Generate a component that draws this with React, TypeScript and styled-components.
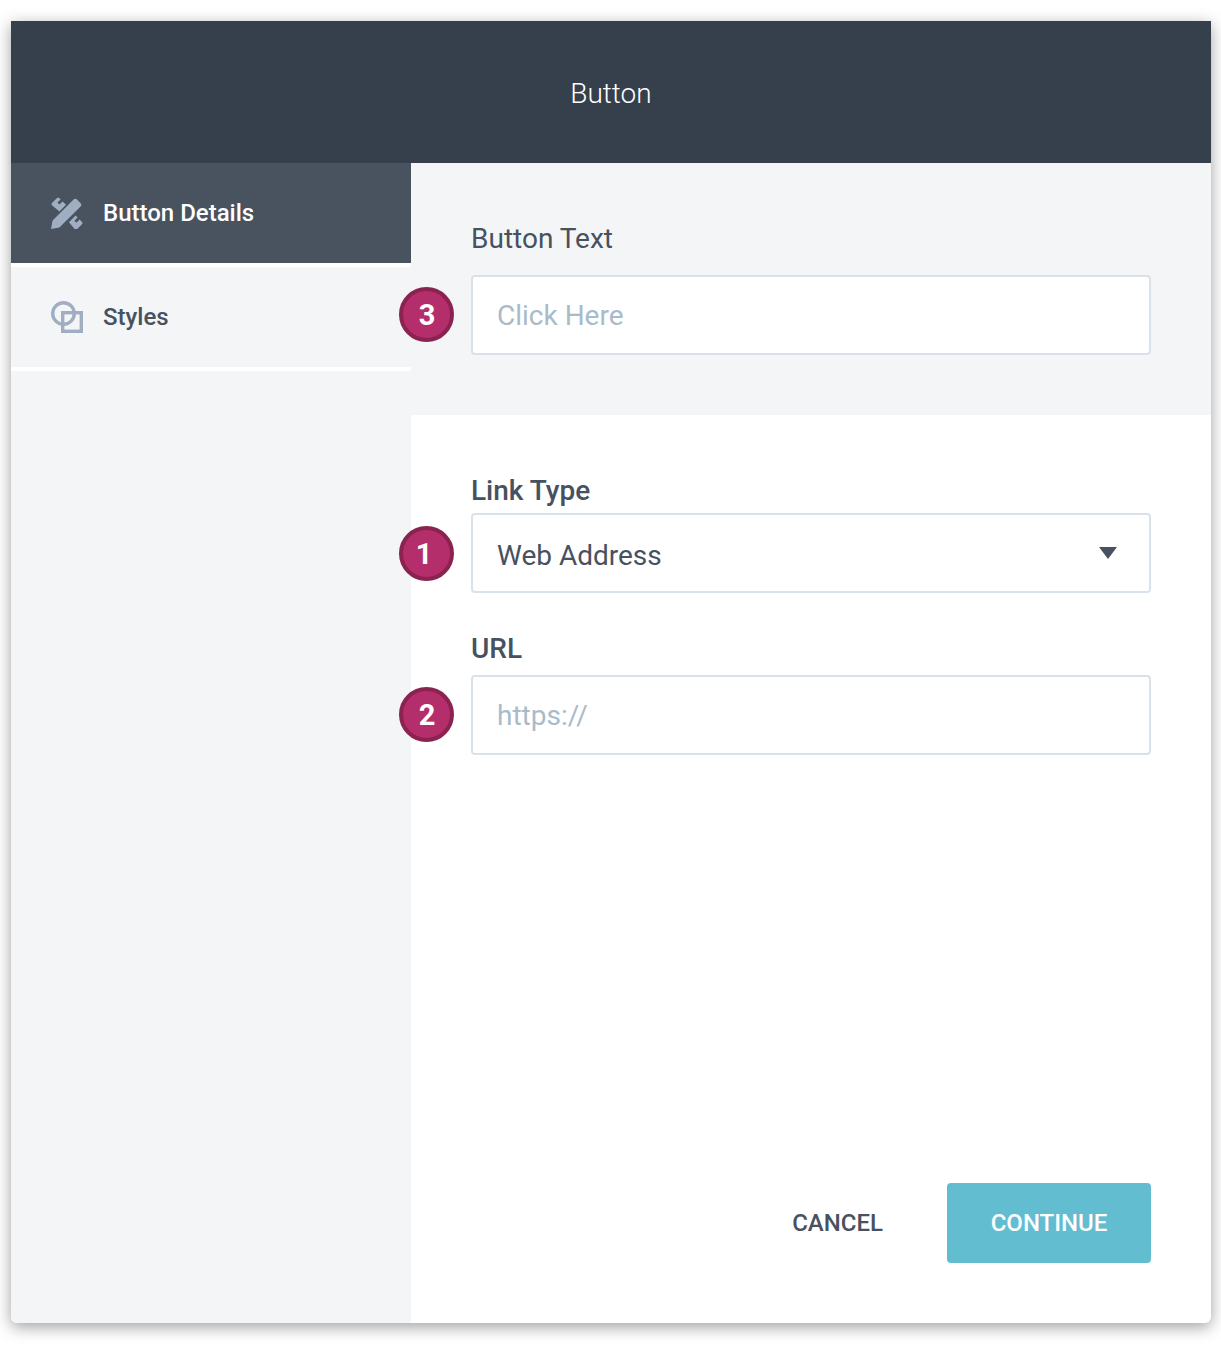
import React from "react";
import styled, { createGlobalStyle } from "styled-components";

const Global = createGlobalStyle`
  html, body { margin: 0; padding: 0; background: #fff; }
  body { font-family: Roboto, "Liberation Sans", sans-serif; -webkit-font-smoothing: antialiased; }
  * { box-sizing: border-box; }
`;

const Page = styled.div`
  width: 1221px;
  height: 1348px;
  padding: 21px 10px 25px 11px;
`;

const Modal = styled.div`
  width: 1200px;
  height: 1302px;
  display: flex;
  flex-direction: column;
  background: #fff;
  border-radius: 0 0 6px 6px;
  box-shadow: 0 4px 16px rgba(0, 0, 0, 0.38);
  overflow: hidden;
`;

const Header = styled.header`
  height: 142px;
  flex: none;
  display: flex;
  align-items: center;
  justify-content: center;
  padding-top: 2px;
  background: #36404c;
  color: #fff;
  font-size: 28px;
  font-weight: 300;
`;

const Body = styled.div`
  flex: 1;
  display: flex;
  min-height: 0;
`;

const Sidebar = styled.nav`
  width: 400px;
  flex: none;
  background: #f3f5f7;
`;

const NavItem = styled.div<{ $active?: boolean }>`
  height: ${(p) => (p.$active ? 100 : 108)}px;
  padding-left: 40px;
  display: flex;
  align-items: center;
  gap: 20px;
  background: ${(p) => (p.$active ? "#49525f" : "#f3f5f7")};
  color: ${(p) => (p.$active ? "#fff" : "#47515f")};
  font-size: 24px;
  font-weight: 500;
  border-top: ${(p) => (p.$active ? "none" : "4px solid #fff")};
  border-bottom: ${(p) => (p.$active ? "none" : "4px solid #fff")};
`;

const NavIcon = styled.svg`
  width: 32px;
  height: 32px;
  flex: none;
  display: block;
`;

const Content = styled.main`
  flex: 1;
  display: flex;
  flex-direction: column;
  min-width: 0;
`;

const TopSection = styled.section`
  height: 252px;
  flex: none;
  padding: 58px 60px 0;
  background: #f3f5f7;
`;

const MainSection = styled.section`
  flex: 1;
  display: flex;
  flex-direction: column;
  padding: 58px 60px 60px;
`;

const Field = styled.div<{ $gap?: number }>`
  position: relative;
  display: flex;
  flex-direction: column;
  margin-top: ${(p) => p.$gap ?? 0}px;
`;

const Label = styled.label<{ $strong?: boolean; $after?: number }>`
  display: block;
  height: 34px;
  line-height: 35px;
  margin-bottom: ${(p) => p.$after ?? 0}px;
  font-size: 28px;
  font-weight: ${(p) => (p.$strong ? 500 : 400)};
  color: #47515f;
`;

const Box = styled.div`
  height: 80px;
  display: flex;
  align-items: center;
  justify-content: space-between;
  padding: 0 32px 0 24px;
  background: #fff;
  border: 2px solid #d9e2ea;
  border-radius: 4px;
  font-size: 28px;
`;

const Placeholder = styled.span`
  color: #a9bbca;
`;

const Value = styled.span`
  color: #47515f;
  padding-top: 4px;
`;

const Caret = styled.svg`
  width: 18px;
  height: 12px;
  display: block;
`;

const Badge = styled.div<{ $top: number; $narrow?: boolean }>`
  position: absolute;
  left: -72px;
  top: ${(p) => p.$top}px;
  width: 55px;
  height: 55px;
  display: flex;
  align-items: center;
  justify-content: center;
  padding: ${(p) => (p.$narrow ? "0 5px 0 0" : "0 0 0 1px")};
  border-radius: 50%;
  background: #b32e6b;
  border: 4px solid #8a2350;
  color: #fff;
  font-size: 29px;
  font-weight: 700;
`;

const Footer = styled.footer`
  margin-top: auto;
  display: flex;
  justify-content: flex-end;
  align-items: center;
`;

const CancelButton = styled.button`
  height: 80px;
  padding: 0;
  margin-right: 64px;
  border: 0;
  background: none;
  font: 500 24px Roboto, sans-serif;
  color: #47515f;
`;

const ContinueButton = styled.button`
  width: 204px;
  height: 80px;
  padding: 0;
  border: 0;
  border-radius: 4px;
  background: #62bdd1;
  font: 500 24px Roboto, sans-serif;
  color: #fff;
`;

export default function App() {
  return (
    <Page>
      <Global />
      <Modal>
        <Header>Button</Header>
        <Body>
          <Sidebar>
            <NavItem $active>
              <NavIcon viewBox="0 0 32 32" fill="#a0aec2">
                <path d="M0 32l1.6-8.4L22.6 2.6c1-1 2.4-1 3.4 0l3.6 3.6c1 1 1 2.4 0 3.4L8.4 30.6z" />
                <path d="M1 6l5-5a1.6 1.6 0 0 1 2.2 0l1.4 1.4-3.2 3.2 2 2 3.2-3.2 3.4 3.4-6.6 6.6L1 8.2A1.6 1.6 0 0 1 1 6z" />
                <path d="M18 25.2l6.6-6.6 2 2-3.2 3.2 2 2 3.2-3.2 2.4 2.4a1.6 1.6 0 0 1 0 2.2l-5 5a1.6 1.6 0 0 1-2.2 0z" />
              </NavIcon>
              Button Details
            </NavItem>
            <NavItem>
              <NavIcon viewBox="0 0 32 32" fill="none" stroke="#a0aec2" strokeWidth="3.4">
                <circle cx="12.5" cy="12.5" r="10.8" />
                <rect x="11.7" y="11.7" width="18.6" height="18.6" />
              </NavIcon>
              Styles
            </NavItem>
          </Sidebar>
          <Content>
            <TopSection>
              <Field>
                <Label $after={20}>Button Text</Label>
                <Box>
                  <Placeholder>Click Here</Placeholder>
                </Box>
                <Badge $top={66}>3</Badge>
              </Field>
            </TopSection>
            <MainSection>
              <Field>
                <Label $strong $after={6}>Link Type</Label>
                <Box>
                  <Value>Web Address</Value>
                  <Caret viewBox="0 0 18 12">
                    <path d="M0 0h18L9 12z" fill="#47515f" />
                  </Caret>
                </Box>
                <Badge $top={53} $narrow>1</Badge>
              </Field>
              <Field $gap={38}>
                <Label $strong $after={10}>URL</Label>
                <Box>
                  <Placeholder>https://</Placeholder>
                </Box>
                <Badge $top={56}>2</Badge>
              </Field>
              <Footer>
                <CancelButton>CANCEL</CancelButton>
                <ContinueButton>CONTINUE</ContinueButton>
              </Footer>
            </MainSection>
          </Content>
        </Body>
      </Modal>
    </Page>
  );
}
